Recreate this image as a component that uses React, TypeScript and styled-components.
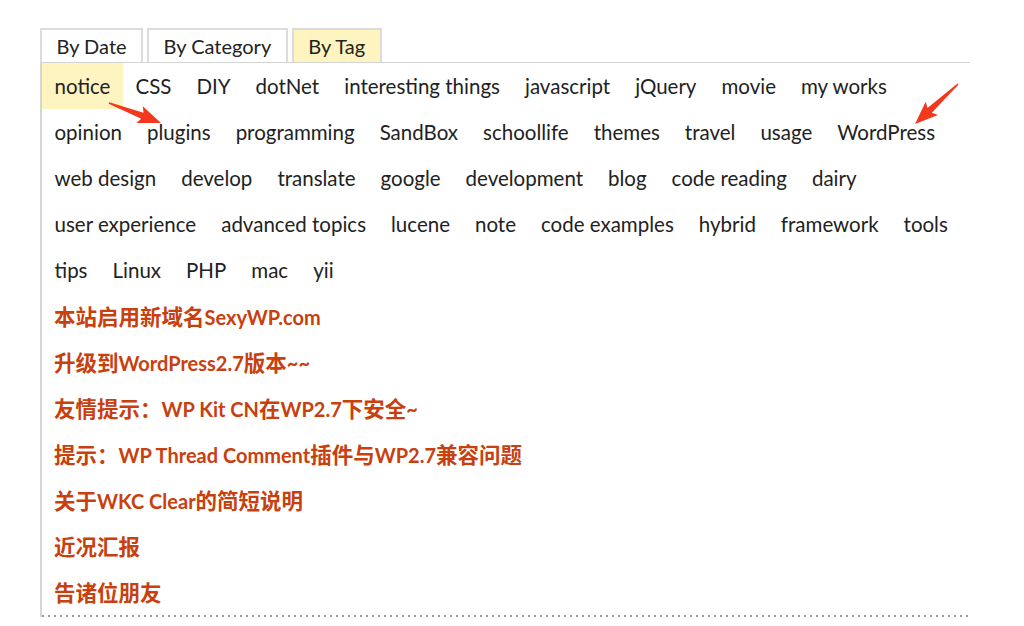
import React from "react";
import styled, { createGlobalStyle } from "styled-components";

const Global = createGlobalStyle`
  html, body { margin: 0; padding: 0; background: #fff; }
  body { font-family: "Lato", "Noto Sans CJK SC", sans-serif; color: #222; }
`;

const Page = styled.div`
  position: relative;
  width: 1024px;
  height: 626px;
  padding: 28px 0 0 40px;
  box-sizing: border-box;
`;

const TabBar = styled.div`
  display: flex;
  gap: 4px;
  width: 930px;
  border-bottom: 1px solid #d4d4d4;
`;

const Tab = styled.div<{ $active?: boolean }>`
  height: 32px;
  padding: 0 14.5px;
  border: 2px solid #dcdcdc;
  background: ${(p) => (p.$active ? "#fdf4bf" : "#fff")};
  font-size: 20px;
  line-height: 33px;
  color: #222;
  margin-bottom: -1px;
  border-bottom: 1px solid #d4d4d4;
`;

const Panel = styled.div`
  width: 928px;
  border-left: 2px solid #d6d6d6;
  padding-bottom: 2px;
  background-image: repeating-linear-gradient(to right, #9a9a9a 0 2px, transparent 2px 6px);
  background-size: 100% 2px;
  background-repeat: no-repeat;
  background-position: bottom left;
`;

const TagRow = styled.div`
  display: flex;
  height: 46px;
`;

const Tag = styled.span<{ $current?: boolean }>`
  padding: 0 12.5px;
  line-height: 46px;
  height: 46px;
  font-size: 20.5px;
  color: #222;
  background: ${(p) => (p.$current ? "#fdf4bf" : "transparent")};
  white-space: nowrap;
`;

const PostLink = styled.a`
  display: block;
  height: 46px;
  line-height: 45px;
  padding-left: 12px;
  font-size: 20px;
  color: #c8400e;
  text-decoration: none;
  white-space: nowrap;
  b { font-weight: 700; }
`;

const Zh = styled.span`
  font-family: "Noto Sans CJK SC", sans-serif;
  font-size: 21.5px;
  font-weight: 700;
`;

const Overlay = styled.svg`
  position: absolute;
  left: 0;
  top: 0;
  pointer-events: none;
`;

const tagRows: string[][] = [
  ["notice", "CSS", "DIY", "dotNet", "interesting things", "javascript", "jQuery", "movie", "my works"],
  ["opinion", "plugins", "programming", "SandBox", "schoollife", "themes", "travel", "usage", "WordPress"],
  ["web design", "develop", "translate", "google", "development", "blog", "code reading", "dairy"],
  ["user experience", "advanced topics", "lucene", "note", "code examples", "hybrid", "framework", "tools"],
  ["tips", "Linux", "PHP", "mac", "yii"],
];

const posts: React.ReactNode[] = [
  <><Zh>本站启用新域名</Zh><b>SexyWP.com</b></>,
  <><Zh>升级到</Zh><b>WordPress2.7</b><Zh>版本</Zh><b>~~</b></>,
  <><Zh>友情提示：</Zh><b>WP Kit CN</b><Zh>在</Zh><b>WP2.7</b><Zh>下安全</Zh><b>~</b></>,
  <><Zh>提示：</Zh><b>WP Thread Comment</b><Zh>插件与</Zh><b>WP2.7</b><Zh>兼容问题</Zh></>,
  <><Zh>关于</Zh><b>WKC Clear</b><Zh>的简短说明</Zh></>,
  <><Zh>近况汇报</Zh></>,
  <><Zh>告诸位朋友</Zh></>,
];

function arrowPoints(tx: number, ty: number, hx: number, hy: number) {
  const dx = hx - tx, dy = hy - ty;
  const len = Math.hypot(dx, dy);
  const ux = dx / len, uy = dy / len;
  const nx = -uy, ny = ux;
  const headLen = 20, headW = 9, shaftW = 3.2, tailW = 0.8;
  const bx = hx - ux * headLen, by = hy - uy * headLen;
  const pts = [
    [tx + nx * tailW, ty + ny * tailW],
    [bx + nx * shaftW, by + ny * shaftW],
    [bx + nx * headW - ux * 3, by + ny * headW - uy * 3],
    [hx, hy],
    [bx - nx * headW - ux * 3, by - ny * headW - uy * 3],
    [bx - nx * shaftW, by - ny * shaftW],
    [tx - nx * tailW, ty - ny * tailW],
  ];
  return pts.map((p) => p.map((v) => v.toFixed(1)).join(",")).join(" ");
}

export default function App() {
  return (
    <>
      <Global />
      <Page>
        <TabBar>
          <Tab>By Date</Tab>
          <Tab>By Category</Tab>
          <Tab $active>By Tag</Tab>
        </TabBar>
        <Panel>
          {tagRows.map((row, i) => (
            <TagRow key={i}>
              {row.map((t) => (
                <Tag key={t} $current={t === "notice"}>{t}</Tag>
              ))}
            </TagRow>
          ))}
          {posts.map((p, i) => (
            <PostLink key={i} href="#">{p}</PostLink>
          ))}
        </Panel>
        <Overlay width="1024" height="626" viewBox="0 0 1024 626">
          <polygon points={arrowPoints(109, 103, 161, 123)} fill="#f2391d" />
          <polygon points={arrowPoints(958, 84, 915, 124)} fill="#f2391d" />
        </Overlay>
      </Page>
    </>
  );
}
